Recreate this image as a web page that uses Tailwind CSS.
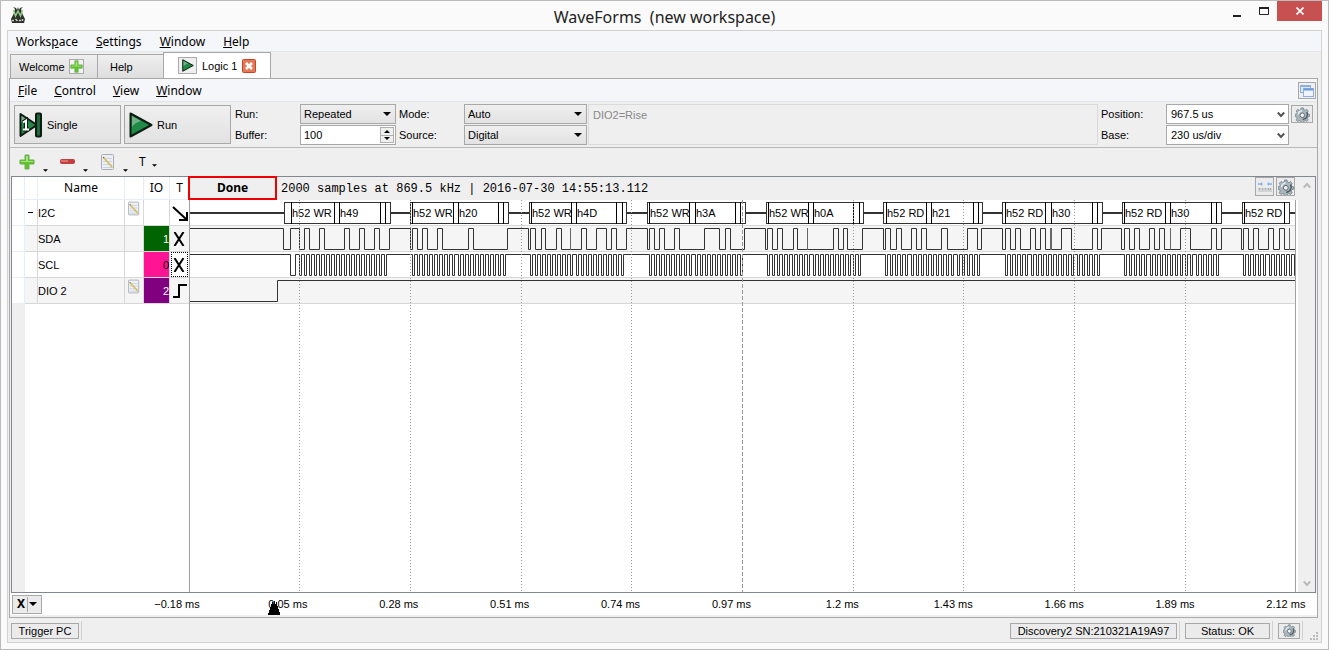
<!DOCTYPE html>
<html lang="en">
<head>
  <meta charset="utf-8">
  <meta name="viewport" content="width=device-width, initial-scale=1">
  <title>WaveForms (new workspace)</title>
  <script src="https://cdn.jsdelivr.net/npm/@tailwindcss/browser@4"></script>
</head>
<body class="bg-[#fafafa] text-black text-[11px] leading-4 font-['Liberation_Sans',sans-serif]">

<!-- shared icons -->
<svg class="hidden">
  <symbol id="gear" viewBox="0 0 16 16">
    <path d="M6.500 1h2.500l.4 2 1.400.6 1.700-1.100 1.700 1.800-1 1.700.6 1.400 1.700.4v2.400l-1.700.5-.6 1.400 1 1.700-1.700 1.700-1.700-1-1.400.6-.4 1.700H6.500l-.5-1.700-1.400-.6-1.700 1-1.700-1.700 1-1.700-.6-1.400L0 10.200V7.800l1.700-.4.6-1.400-1-1.700L3 2.500l1.700 1.100L6.100 3z" fill="#aab6bc" stroke="#6f7f87" stroke-width=".8"/>
    <path d="M12.500 5.500l.8 3-1.600 3.500-3.500 1.500" fill="none" stroke="#4d5b62" stroke-width="1.500"/>
    <path d="M3.500 8a4.500 4.500 0 0 1 4-4" fill="none" stroke="#e6eef2" stroke-width="1.500"/>
    <circle cx="7.800" cy="8.800" r="2.400" fill="#f3f3f3" stroke="#5d6a70"/>
  </symbol>
  <symbol id="note" viewBox="0 0 14 16">
    <rect x=".5" y=".5" width="12" height="15" rx="1" fill="#eceff3" stroke="#a9adb3"/>
    <path d="M2 4.500h9M2 7.500h9M2 10.500h9M2 13.500h9" stroke="#c8d3e8"/>
    <path d="M2.500 3.500l9 10" stroke="#d9bd5a" stroke-width="1.800"/>
    <path d="M2 3l1 1" stroke="#8b8566" stroke-width="1.500"/>
  </symbol>
  <symbol id="plus" viewBox="0 0 16 16">
    <path d="M6 1h4v5h5v4h-5v5H6v-5H1V6h5z" fill="#5fc32c" stroke="#6fae55"/>
    <path d="M7 2h2v5h5v1H2V7h5z" fill="#a4e57c"/>
  </symbol>
  <symbol id="play" viewBox="0 0 24 26">
    <path d="M1.500 1.500L22.500 13 1.500 24.500z" fill="#1f8a45" stroke="#0d1c12" stroke-width="2" stroke-linejoin="round"/>
    <path d="M3 4l9 5c-4 1-7 3-9 6z" fill="#6fb285"/>
  </symbol>
  <symbol id="down" viewBox="0 0 8 4"><path d="M0 0h8L4 4z"/></symbol>
  <symbol id="chevron" viewBox="0 0 8 8"><path d="M.8 1.500L4 5l3.200-3.500" fill="none" stroke="currentColor" stroke-width="2"/></symbol>
</svg>

<div class="min-h-screen flex flex-col border border-[#bbb] bg-[#fafafa]">

  <header class="relative h-[29px] flex items-center justify-center">
    <svg class="absolute left-[9px] top-1.5 size-4" viewBox="0 0 16 16">
      <path d="M3 0l2 2-1 4-3 6 1 4h12l1-4-3-6-1-4 2-2-3 1-1 2-1-3-1 3-1-2z" fill="#2b3028"/>
      <path d="M3.500 3l2 6L8 4l2.500 5 2-6" fill="none" stroke="#93c787" stroke-width="1.600"/>
      <path d="M2 13.500h2M5.500 12l2 2M9 13.500h2M12.500 12v2" stroke="#c9cdc6" stroke-width="1.500"/>
    </svg>
    <h1 class="pt-0.5 text-[16px] leading-5 text-[#222] font-['Noto_Sans',sans-serif]">WaveForms &nbsp;(new workspace)</h1>
    <div class="absolute right-1.5 top-0 flex h-5">
      <button aria-label="Minimize" class="w-[27px] grid place-items-center"><svg class="w-2 h-3 mt-1" viewBox="0 0 8 12"><path d="M0 8h8v2H0z" fill="#222"/></svg></button>
      <button aria-label="Maximize" class="w-[27px] grid place-items-center"><svg class="w-2.5 h-2" viewBox="0 0 10 8"><path d="M.5 0v7.500h9V0" fill="none" stroke="#222"/><path d="M0 0h10v2H0z" fill="#222"/></svg></button>
      <button aria-label="Close" class="w-[45px] bg-[#c75050] grid place-items-center"><svg class="size-2" viewBox="0 0 8 8"><path d="M.5.5l7 7m0-7l-7 7" stroke="#fff" stroke-width="1.600"/></svg></button>
    </div>
  </header>

  <main class="flex-1 flex flex-col mx-1.5 mb-1.5 border border-[#d2d2d2] bg-[#efefef]">
    <nav class="h-[21px] flex items-center gap-[18px] px-2 pt-0.5 bg-[#f4f6f9] border-b border-[#e4e6ea] text-[12px] font-['Noto_Sans',sans-serif]">
      <button>Works<u>p</u>ace</button>
      <button><u>S</u>ettings</button>
      <button><u>W</u>indow</button>
      <button><u>H</u>elp</button>
    </nav>

    <!-- tabs -->
    <div class="h-[26px] flex items-end pl-0.5" role="tablist">
      <button role="tab" class="w-[88px] h-6 flex items-center gap-1 px-2 border border-b-0 border-[#a8a8a8] bg-linear-to-b from-[#efefef] to-[#dedede]">Welcome
        <span class="size-[15px] border border-[#aaa] bg-[#f2f2f2]"><svg class="size-[13px]"><use href="#plus"/></svg></span>
      </button>
      <button role="tab" class="w-[65px] h-6 px-3 text-left border border-b-0 border-l-0 border-r-0 border-[#a8a8a8] bg-linear-to-b from-[#efefef] to-[#dedede]">Help</button>
      <button role="tab" aria-selected="true" class="w-[108px] h-[26px] flex items-center gap-1 pl-3.5 border border-b-0 border-[#a8a8a8] bg-white">
        <span class="w-[19px] h-[17px] grid place-items-center border border-[#aaa] bg-[#efefef]"><svg class="w-3 h-[13px]"><use href="#play"/></svg></span>
        <span class="px-px">Logic 1</span>
        <svg class="size-3.5" viewBox="0 0 14 14"><rect x=".5" y=".5" width="13" height="13" rx="1" fill="#e37a55" stroke="#c8432c"/><path d="M4 4l6 6m0-6l-6 6" stroke="#fff" stroke-width="2.500"/></svg>
      </button>
    </div>

    <section class="flex-1 flex flex-col mx-px mr-[3px] border border-[#a8a8a8] bg-[#efefef]">
      <nav class="h-[23px] flex items-center gap-[17px] pl-2 pr-px pt-px bg-[#f4f6f9] border-b border-[#dfe2e6] text-[12px] font-['Noto_Sans',sans-serif]">
        <button><u>F</u>ile</button>
        <button><u>C</u>ontrol</button>
        <button><u>V</u>iew</button>
        <button><u>W</u>indow</button>
        <button aria-label="Float window" class="ml-auto w-[18px] h-[17px] grid place-items-center border border-[#a8a8a8] bg-[#efefef]">
          <svg class="w-3.5 h-3" viewBox="0 0 14 12"><rect x=".5" y=".5" width="10" height="7" fill="#dbe8fa" stroke="#8fb0de"/><path d="M1 1.500h9" stroke="#8fb0de"/><rect x="3.500" y="3.500" width="10" height="8" fill="#eef4fd" stroke="#8fb0de"/><path d="M4 4.500h9" stroke="#6d9ad8" stroke-width="2"/></svg>
        </button>
      </nav>

      <!-- acquisition settings -->
      <div class="h-[46px] flex items-start gap-[3px] px-1 pt-0.5 border-b border-[#b8b8b8]">
        <button class="w-[107px] h-[39px] mt-px flex items-center gap-1 pl-1 border border-[#a8a8a8] bg-linear-to-b from-[#efefef] to-[#e2e2e2]">
          <svg class="w-6 h-[26px]" viewBox="0 0 24 26">
            <path d="M1.500 2L18 13 1.500 24z" fill="#2a8447" stroke="#0d1c12" stroke-width="2" stroke-linejoin="round"/>
            <rect x="17" y="1.500" width="5" height="23" rx="1" fill="#1f6a38" stroke="#0d1c12" stroke-width="2"/>
            <path d="M2.500 4l6 4-6 2z" fill="#86a990"/>
            <path d="M4 10.500L7 8.500v9M4 17.500h6" fill="none" stroke="#0d1c12" stroke-width="4"/>
            <path d="M4 10.500L7 8.500v9M4 17.500h6" fill="none" stroke="#fff" stroke-width="2"/>
          </svg>
          Single
        </button>
        <button class="w-[107px] h-[39px] mt-px flex items-center gap-1 pl-1 border border-[#a8a8a8] bg-linear-to-b from-[#efefef] to-[#e2e2e2]">
          <svg class="w-6 h-[26px]"><use href="#play"/></svg>
          Run
        </button>
        <div class="grid grid-cols-[65px_96px] gap-y-px items-center pl-px">
          <label for="run">Run:</label>
          <div class="relative">
            <select id="run" class="appearance-none w-full h-5 px-[3px] border border-[#a8a8a8] bg-linear-to-b from-[#efefef] to-[#e2e2e2]"><option>Repeated</option></select>
            <svg class="absolute right-[5px] top-2 w-2 h-1 pointer-events-none"><use href="#down"/></svg>
          </div>
          <label for="buffer">Buffer:</label>
          <div class="flex h-5 border border-[#a8a8a8] bg-white p-px">
            <input id="buffer" value="100" class="flex-1 min-w-0 px-0.5">
            <div class="w-3.5 flex flex-col bg-[#efefef]">
              <button aria-label="More" class="flex-1 grid place-items-center border border-[#b0b0b0]"><svg class="w-1.5 h-[3px] rotate-180" viewBox="0 0 8 4"><path d="M0 0h8L4 4z"/></svg></button>
              <button aria-label="Less" class="flex-1 grid place-items-center border border-t-0 border-[#b0b0b0]"><svg class="w-1.5 h-[3px]" viewBox="0 0 8 4"><path d="M0 0h8L4 4z"/></svg></button>
            </div>
          </div>
        </div>
        <div class="grid grid-cols-[65px_123px] gap-y-px items-center">
          <label for="mode">Mode:</label>
          <div class="relative">
            <select id="mode" class="appearance-none w-full h-5 px-[3px] border border-[#a8a8a8] bg-linear-to-b from-[#efefef] to-[#e2e2e2]"><option>Auto</option></select>
            <svg class="absolute right-[5px] top-2 w-2 h-1 pointer-events-none"><use href="#down"/></svg>
          </div>
          <label for="source">Source:</label>
          <div class="relative">
            <select id="source" class="appearance-none w-full h-5 px-[3px] border border-[#a8a8a8] bg-linear-to-b from-[#efefef] to-[#e2e2e2]"><option>Digital</option></select>
            <svg class="absolute right-[5px] top-2 w-2 h-1 pointer-events-none"><use href="#down"/></svg>
          </div>
        </div>
        <textarea aria-label="Trigger" disabled class="flex-1 h-[41px] -ml-0.5 px-1 py-0.5 resize-none border border-[#dadada] text-[#888]">DIO2=Rise</textarea>
        <div class="grid grid-cols-[65px_123px] gap-y-px items-center">
          <label for="position">Position:</label>
          <div class="relative">
            <select id="position" class="appearance-none w-full h-5 px-1 border border-[#a8a8a8] bg-white"><option>967.5 us</option></select>
            <svg class="absolute right-1 top-[7px] size-2 text-[#555] pointer-events-none"><use href="#chevron"/></svg>
          </div>
          <label for="base">Base:</label>
          <div class="relative">
            <select id="base" class="appearance-none w-full h-5 px-1 border border-[#a8a8a8] bg-white"><option>230 us/div</option></select>
            <svg class="absolute right-1 top-[7px] size-2 text-[#555] pointer-events-none"><use href="#chevron"/></svg>
          </div>
        </div>
        <button aria-label="Options" class="w-[22px] h-[18px] mt-px -ml-px grid place-items-center border border-[#a8a8a8] bg-[#ebebeb]"><svg class="size-[15px]"><use href="#gear"/></svg></button>
      </div>

      <!-- channel tools -->
      <div class="h-7 flex items-center gap-[11px] pl-[9px]">
        <button aria-label="Add channel" class="flex items-end gap-2"><svg class="size-4"><use href="#plus"/></svg><svg class="w-[5px] h-[3px] -mb-0.5" viewBox="0 0 8 4"><path d="M0 0h8L4 4z"/></svg></button>
        <button aria-label="Remove channel" class="flex items-end gap-2"><svg class="size-4" viewBox="0 0 16 16"><rect x="1.500" y="5.500" width="14" height="4" rx="1" fill="#cf3a3a" stroke="#b54545"/><path d="M2 7h7" stroke="#f0a0a0"/></svg><svg class="w-[5px] h-[3px] -mb-0.5" viewBox="0 0 8 4"><path d="M0 0h8L4 4z"/></svg></button>
        <button aria-label="Edit channel" class="flex items-end gap-2 pl-0.5"><svg class="w-3.5 h-4"><use href="#note"/></svg><svg class="w-[5px] h-[3px] -mb-0.5" viewBox="0 0 8 4"><path d="M0 0h8L4 4z"/></svg></button>
        <button class="flex items-center gap-1.5 font-['Noto_Sans',sans-serif] text-[12px]">T <svg class="w-[5px] h-[3px] mt-1.5" viewBox="0 0 8 4"><path d="M0 0h8L4 4z"/></svg></button>
      </div>

      <div class="flex-1 flex mx-px border border-[#828790] bg-white">
        <!-- channel list -->
        <div class="w-[178px] flex flex-col shrink-0 border-r border-[#a0a0a0]">
          <table class="w-full table-fixed border-separate border-spacing-0">
            <colgroup><col class="w-[13px]"><col class="w-[13px]"><col class="w-[87px]"><col class="w-[19px]"><col class="w-[26px]"><col></colgroup>
            <thead class="font-['Noto_Sans',sans-serif] text-[12px]">
              <tr class="h-[23px]">
                <th class="p-0 border-r border-b border-[#e5eefa]"></th>
                <th class="p-0 border-r border-b border-[#e5eefa]"></th>
                <th class="p-0 font-normal border-r border-b border-[#e5eefa]">Name</th>
                <th class="p-0 border-r border-b border-[#e5eefa]"></th>
                <th class="p-0 font-normal border-r border-b border-[#e5eefa]">IO</th>
                <th class="p-0 font-normal border-b border-[#e5eefa]">T</th>
              </tr>
            </thead>
            <tbody>
              <tr class="h-[26px]">
                <td class="p-0 border-r border-b border-[#e5eefa]"></td>
                <td class="p-0 border-r border-b border-[#d8d8d8]"><button aria-label="Collapse" class="ml-[3px] block w-[5px] h-px bg-black"></button></td>
                <td class="p-0 border-r border-b border-[#d8d8d8]">I2C</td>
                <td class="p-0 border-r border-b border-[#d8d8d8] align-top"><svg class="ml-[3px] mt-px w-3 h-[15px]"><use href="#note"/></svg></td>
                <td class="p-0 border-r border-b border-[#d8d8d8]"></td>
                <td class="p-0 border-b border-[#d8d8d8]"><svg class="ml-0.5 size-4" viewBox="0 0 16 16"><path d="M1 2l13 12M15 7v8H7" fill="none" stroke="#000" stroke-width="2"/></svg></td>
              </tr>
              <tr class="h-[26px]">
                <td class="p-0 border-r border-b border-[#e5eefa]"></td>
                <td class="p-0 border-r border-b border-[#d8d8d8] bg-[#f5f5f5]"></td>
                <td class="p-0 border-r border-b border-[#d8d8d8] bg-[#f5f5f5]">SDA</td>
                <td class="p-0 border-r border-b border-[#d8d8d8] bg-[#f5f5f5]"></td>
                <td class="p-0 text-right border-r border-b border-[#d8d8d8] bg-[#006400] text-white">1</td>
                <td class="p-0 border-b border-[#d8d8d8] bg-[#f5f5f5]"><svg class="ml-[3px] size-3.5" viewBox="0 0 14 14"><path d="M1.500 0l9 14m0-14l-9 14" stroke="#000" stroke-width="2"/></svg></td>
              </tr>
              <tr class="h-[26px]">
                <td class="p-0 border-r border-b border-[#e5eefa]"></td>
                <td class="p-0 border-r border-b border-[#d8d8d8]"></td>
                <td class="p-0 border-r border-b border-[#d8d8d8]">SCL</td>
                <td class="p-0 border-r border-b border-[#d8d8d8]"></td>
                <td class="p-0 text-right border-r border-b border-[#d8d8d8] bg-[#ff1493]">0</td>
                <td class="p-0 border-b border-[#d8d8d8]"><div class="mx-px h-[25px] flex items-center border border-dotted border-black"><svg class="ml-px size-3.5" viewBox="0 0 14 14"><path d="M1.500 0l9 14m0-14l-9 14" stroke="#000" stroke-width="2"/></svg></div></td>
              </tr>
              <tr class="h-[26px]">
                <td class="p-0 border-r border-b border-[#e5eefa]"></td>
                <td class="p-0 border-r border-b border-[#d8d8d8] bg-[#f5f5f5]"></td>
                <td class="p-0 border-r border-b border-[#d8d8d8] bg-[#f5f5f5]">DIO 2</td>
                <td class="p-0 border-r border-b border-[#d8d8d8] bg-[#f5f5f5] align-top"><svg class="ml-[3px] mt-px w-3 h-[15px]"><use href="#note"/></svg></td>
                <td class="p-0 text-right border-r border-b border-[#d8d8d8] bg-[#800080] text-white">2</td>
                <td class="p-0 border-b border-[#d8d8d8] bg-[#f5f5f5]"><svg class="ml-[3px] size-4" viewBox="0 0 16 16"><path d="M0 14h6V2h8" fill="none" stroke="#000" stroke-width="2"/></svg></td>
              </tr>
            </tbody>
          </table>
          <div class="flex-1 w-[13px] bg-[#efefef]"></div>
        </div>

        <!-- plot -->
        <div class="flex-1 min-w-0 flex flex-col">
          <div class="h-[23px] shrink-0 flex items-center gap-1 bg-[#efefef]">
            <strong class="w-[89px] h-6 -ml-0.5 -mt-0.5 grid place-items-center border-2 border-[#f00000] text-[12px] font-bold font-['Noto_Sans',sans-serif]">Done</strong>
            <span class="text-[12px] whitespace-nowrap font-['Liberation_Mono',monospace]">2000 samples at 869.5 kHz | 2016-07-30 14:55:13.112</span>
            <button aria-label="Show ruler" class="ml-auto w-[19px] h-[19px] -mt-1 grid place-items-center border border-[#a8a8a8] bg-[#ebebeb]">
              <svg class="w-3.5 h-3" viewBox="0 0 14 12"><path d="M0 3h4M10 3h4" stroke="#7fb0ec" stroke-width="1.500"/><path d="M3 1l2 2-2 2zM11 1L9 3l2 2z" fill="#7fb0ec"/><path d="M0 7h14v4H0z" fill="#d0d3d6"/><path d="M1.500 7v2m3-2v2m3-2v2m3-2v2m2-2v2" stroke="#aaa"/></svg>
            </button>
            <button aria-label="Plot options" class="w-[19px] h-[19px] -ml-0.5 -mt-1 mr-[3px] grid place-items-center border border-[#a8a8a8] bg-[#ebebeb]"><svg class="size-4"><use href="#gear"/></svg></button>
          </div>
          <div class="relative flex-1 overflow-hidden mr-0.5 border-r border-[#a0a0a0]">
            <svg id="plot" class="absolute left-0 top-0" width="1107" height="392" viewBox="190 200 1107 392"></svg>
          </div>
        </div>
        <div class="w-[17px] flex flex-col items-center justify-between py-1 bg-[#efefef] text-[#bbb]">
          <svg class="size-2 rotate-180"><use href="#chevron"/></svg>
          <svg class="size-2"><use href="#chevron"/></svg>
        </div>
      </div>

      <!-- time axis -->
      <div class="relative h-6 shrink-0 flex items-center pl-0.5 bg-white border-b-2 border-[#efefef]">
        <button class="w-[30px] h-[19px] flex items-center justify-between px-1 border border-[#a8a8a8] bg-[#ebebeb] text-[12px] font-bold font-['Noto_Sans',sans-serif]">X
          <span class="h-[15px] border-l border-[#a8a8a8]"></span>
          <svg class="w-2 h-1"><use href="#down"/></svg>
        </button>
        <div id="axis" class="flex-1 flex justify-between ml-[105px] mr-px text-center"></div>
        <svg class="absolute left-[258px] bottom-0 w-[13px] h-3.5" viewBox="0 0 13 14"><path d="M6 0h1v3h1V1h1v4h1v3h1v3h1v3H0v-2h1V9h1V6h1V3h1V1h1v2h1z"/></svg>
      </div>
    </section>

    <footer class="h-6 flex items-center px-[3px] pt-px">
      <button class="h-4 px-[5px] w-[68px] leading-3 border border-[#a8a8a8] bg-[#ebebeb]">Trigger PC</button>
      <span class="ml-0.5 h-[19px] border-l border-[#d0d0d0]"></span>
      <button class="ml-auto w-[167px] h-4 leading-3 border border-[#a8a8a8] bg-[#ebebeb]">Discovery2 SN:210321A19A97</button>
      <span class="ml-0.5 mr-[5px] h-[19px] border-l border-[#d0d0d0]"></span>
      <button class="w-[85px] h-4 leading-3 border border-[#a8a8a8] bg-[#ebebeb]">Status: OK</button>
      <span class="ml-0.5 mr-[5px] h-[19px] border-l border-[#d0d0d0]"></span>
      <button aria-label="Device options" class="w-[22px] h-4 grid place-items-center border border-[#a8a8a8] bg-[#ebebeb]"><svg class="size-[13px]"><use href="#gear"/></svg></button>
      <span class="ml-0.5 h-[19px] border-l border-[#d0d0d0]"></span>
      <svg class="ml-[7px] mt-2.5 size-2" viewBox="0 0 8 8" fill="#bbb"><path d="M6 0h2v2H6zM3 3h2v2H3zM6 3h2v2H6zM0 6h2v2H0zM3 6h2v2H3zM6 6h2v2H6z"/></svg>
    </footer>
  </main>
</div>

<script>
  const LEFT = 190, RIGHT = 1297;
  const INK = '#333';

  // start, inner dividers, end, address text, data text
  const packets = [
    [[284, 291, 334, 339, 380, 385, 390], 'h52 WR', 'h49'],
    [[410, 412, 453, 458, 498, 503, 508], 'h52 WR', 'h20'],
    [[529, 531, 571, 576, 616, 622, 626], 'h52 WR', 'h4D'],
    [[647, 649, 689, 695, 735, 740, 745], 'h52 WR', 'h3A'],
    [[766, 768, 808, 813, 853, 859, 863], 'h52 WR', 'h0A'],
    [[883, 886, 926, 931, 973, 978, 982], 'h52 RD', 'h21'],
    [[1002, 1005, 1045, 1051, 1092, 1097, 1102], 'h52 RD', 'h30'],
    [[1122, 1124, 1165, 1170, 1211, 1216, 1221], 'h52 RD', 'h30'],
    [[1242, 1244, 1284, 1289], 'h52 RD', ''],
  ];

  const sda = [
    283, 290, 299, 304, 309, 319, 324, 344, 349, 359, 364, 374, 379, 389,
    410, 412, 417, 422, 427, 437, 442, 468, 473, 507,
    528, 530, 535, 541, 545, 556, 561, 581, 586, 596, 606, 611, 616, 626,
    647, 649, 654, 659, 664, 674, 679, 704, 719, 725, 730, 744,
    765, 767, 772, 777, 782, 793, 797, 833, 838, 843, 847, 862,
    883, 885, 890, 896, 901, 911, 916, 921, 926, 941, 947, 967, 977, 981,
    1002, 1005, 1010, 1015, 1020, 1030, 1035, 1040, 1045, 1061, 1071, 1092, 1097, 1101,
    1121, 1124, 1129, 1134, 1139, 1149, 1154, 1159, 1164, 1180, 1190, 1211, 1216, 1221,
    1241, 1243, 1248, 1253, 1258, 1268, 1273, 1279, 1284,
  ];
  const glitches = [570, 807, 1050, 1051, 1170, 1289];

  // clock bursts: first fall, last rise, number of low pulses
  const bursts = [[299, 386, 18], [412, 505, 19], [530, 623, 19], [649, 742, 19], [767, 860, 19],
    [885, 979, 19], [1005, 1099, 19], [1124, 1218, 19], [1243, 1337, 19]];
  const scl = [290, 295];
  for (const [first, last, n] of bursts) {
    const step = (last - 2 - first) / (n - 1);
    for (let i = 0; i < n; i++) {
      const x = Math.round(first + i * step);
      scl.push(x, x + 2);
    }
  }

  // level toggles at each edge
  function wave(edges, high, low, startHigh) {
    let level = startHigh;
    let d = `M${LEFT} ${(level ? high : low) + 0.5}`;
    for (const x of edges) {
      if (x > RIGHT) break;
      level = !level;
      d += `H${x + 0.5}V${(level ? high : low) + 0.5}`;
    }
    return `<path d="${d}H${RIGHT}" fill="none" stroke="${INK}"/>`;
  }

  let out = '';
  // row stripes and separators
  out += `<path d="M${LEFT} 226H${RIGHT}v25H${LEFT}zM${LEFT} 278H${RIGHT}v25H${LEFT}z" fill="#f5f5f5"/>`;
  for (const y of [225, 251, 277, 303]) out += `<path d="M${LEFT} ${y}.5H${RIGHT}" stroke="#d8d8d8"/>`;

  out += `<path d="M${LEFT} 213H${RIGHT}" stroke="${INK}" stroke-width="2"/>`;
  for (const [xs, addr, data] of packets) {
    const a = xs[0], b = xs[xs.length - 1];
    out += `<rect x="${a + 0.5}" y="202.5" width="${b - a}" height="21" fill="#fff" stroke="${INK}"/>`;
    for (const x of xs.slice(1, -1)) out += `<path d="M${x + 0.5} 202V224" stroke="#000"/>`;
    out += `<text x="${xs[1] + 1}" y="217" font-size="11">${addr}</text>`;
    if (data) out += `<text x="${xs[3] + 1}" y="217" font-size="11">${data}</text>`;
  }

  out += wave(sda, 228, 249, true);
  for (const x of glitches) out += `<path d="M${x + 0.5} 228V250" stroke="#666"/>`;
  out += wave(scl, 254, 275, true);
  out += wave([277], 280, 301, false);

  // time grid
  for (const x of [299, 410, 521, 631, 853, 963, 1074, 1185]) {
    out += `<path d="M${x + 0.5} 200V592" stroke="#999" stroke-dasharray="1 2"/>`;
  }
  out += '<path d="M742.5 200V592" stroke="#999" stroke-dasharray="4 2"/>';
  document.getElementById('plot').innerHTML = out;

  const ticks = ['−0.18', '0.05', '0.28', '0.51', '0.74', '0.97', '1.2', '1.43', '1.66', '1.89', '2.12'];
  document.getElementById('axis').innerHTML = ticks.map(t => `<span class="w-[60px]">${t} ms</span>`).join('');
</script>
</body>
</html>
